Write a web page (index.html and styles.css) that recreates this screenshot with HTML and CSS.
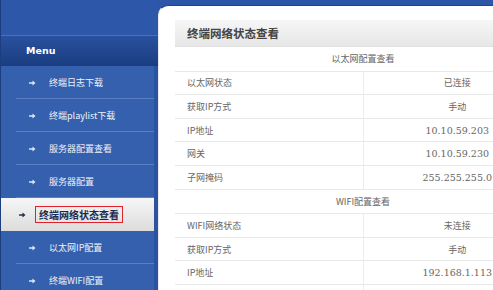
FILE: index.html
```html
<!DOCTYPE html>
<html>
<head>
<meta charset="utf-8">
<link rel="stylesheet" href="styles.css">
</head>
<body>
<div class="app">
  <aside class="sidebar">
    <div class="sidebar-top"></div>
    <div class="menu-head">Menu</div>
    <ul class="menu">
      <li class="item"><svg class="arrow" viewBox="0 0 8 7"><path d="M0 2.5h4V0.5L7.5 3.5 4 6.5V4.5H0z"/></svg><span>终端日志下载</span></li>
      <li class="item"><svg class="arrow" viewBox="0 0 8 7"><path d="M0 2.5h4V0.5L7.5 3.5 4 6.5V4.5H0z"/></svg><span>终端playlist下载</span></li>
      <li class="item"><svg class="arrow" viewBox="0 0 8 7"><path d="M0 2.5h4V0.5L7.5 3.5 4 6.5V4.5H0z"/></svg><span>服务器配置查看</span></li>
      <li class="item"><svg class="arrow" viewBox="0 0 8 7"><path d="M0 2.5h4V0.5L7.5 3.5 4 6.5V4.5H0z"/></svg><span>服务器配置</span></li>
      <li class="item active"><svg class="arrow" viewBox="0 0 8 7"><path d="M0 2.5h4V0.5L7.5 3.5 4 6.5V4.5H0z"/></svg><span class="boxed">终端网络状态查看</span></li>
      <li class="item"><svg class="arrow" viewBox="0 0 8 7"><path d="M0 2.5h4V0.5L7.5 3.5 4 6.5V4.5H0z"/></svg><span>以太网IP配置</span></li>
      <li class="item"><svg class="arrow" viewBox="0 0 8 7"><path d="M0 2.5h4V0.5L7.5 3.5 4 6.5V4.5H0z"/></svg><span>终端WIFI配置</span></li>
    </ul>
  </aside>
  <main class="main">
    <div class="panel">
      <div class="panel-title">终端网络状态查看</div>
      <table class="info">
        <tr><td class="section" colspan="2">以太网配置查看</td></tr>
        <tr><td>以太网状态</td><td class="val">已连接</td></tr>
        <tr><td>获取IP方式</td><td class="val">手动</td></tr>
        <tr><td>IP地址</td><td class="val num">10.10.59.203</td></tr>
        <tr><td>网关</td><td class="val num">10.10.59.230</td></tr>
        <tr><td>子网掩码</td><td class="val num">255.255.255.0</td></tr>
        <tr><td class="section" colspan="2">WIFI配置查看</td></tr>
        <tr><td>WIFI网络状态</td><td class="val">未连接</td></tr>
        <tr><td>获取IP方式</td><td class="val">手动</td></tr>
        <tr><td>IP地址</td><td class="val num">192.168.1.113</td></tr>
        <tr><td></td><td class="val"></td></tr>
      </table>
    </div>
  </main>
</div>
</body>
</html>
```

FILE: styles.css
```css
html, body {
  margin: 0;
  padding: 0;
}
body {
  width: 493px;
  height: 290px;
  overflow: hidden;
  background: #2d56a8;
  font-family: "Noto Sans CJK SC", "DejaVu Sans", sans-serif;
}
.app {
  display: flex;
  height: 290px;
}
.sidebar {
  width: 157px;
  flex: none;
  background: #3460ad;
  border-left: 1px solid #1c3d7e;
  display: flex;
  flex-direction: column;
  overflow: hidden;
}
.sidebar > * {
  flex: none;
}
.sidebar-top {
  height: 35px;
  background: #2d57a9;
}
.menu-head {
  height: 31px;
  box-sizing: border-box;
  border-top: 1px solid #4a70b8;
  background: linear-gradient(#2a519f, #1a3d80);
  color: #fff;
  font-family: "DejaVu Sans", sans-serif;
  font-weight: bold;
  font-size: 9.5px;
  line-height: 30px;
  padding-left: 25px;
}
.menu {
  list-style: none;
  margin: 0;
  padding: 0;
}
.item {
  height: 33px;
  box-sizing: border-box;
  display: flex;
  align-items: center;
  padding-left: 28px;
  color: #eef2fb;
  font-size: 9px;
  position: relative;
  border-right: 4px solid #2b539f;
}
.item::after {
  content: "";
  position: absolute;
  left: 15px;
  right: 0;
  bottom: 0;
  height: 1px;
  background: #5a7fc2;
}
.arrow {
  width: 7px;
  height: 6px;
  fill: #dfe8f8;
  margin-right: 13px;
  flex: none;
}
.item.active {
  background: linear-gradient(#f6f6f6, #dcdcdc);
  padding-left: 18px;
  color: #1c2a4d;
  font-weight: bold;
  font-size: 10px;
}
.item.active::after {
  display: none;
}
.item.active .arrow {
  fill: #22304f;
  margin-right: 9px;
}
.boxed {
  border: 1px solid #e0202a;
  padding: 1px 3px;
  line-height: 13px;
}
.main {
  flex: 1;
  padding-top: 5px;
  min-width: 0;
  overflow: hidden;
}
.panel {
  background: #fff;
  height: 100%;
  border-top: 1px solid #1f4590;
  border-top-left-radius: 10px;
  border-left: 1px solid #eaeaea;
  padding: 14px 0 0 16px;
  box-sizing: border-box;
}
.panel-title {
  width: 380px;
  height: 27px;
  box-sizing: border-box;
  background: linear-gradient(#f6f6f6, #e7e7e7);
  border-bottom: 1px solid #e2e2e2;
  color: #444;
  font-weight: bold;
  font-size: 11.5px;
  line-height: 27px;
  padding-left: 12px;
}
.info {
  width: 376px;
  border-collapse: collapse;
  color: #666;
  font-size: 9px;
}
.info td {
  height: 22.6px;
  padding: 0 0 0 12px;
  border-bottom: 1px solid #e8e8e8;
  width: 50%;
}
.info td.section {
  text-align: center;
  padding: 0;
  height: 23.6px;
}
.info td.val {
  text-align: center;
  border-left: 1px solid #ececec;
  padding: 0;
}
.info td.num {
  font-family: "DejaVu Serif", serif;
  font-size: 9.5px;
}
```
